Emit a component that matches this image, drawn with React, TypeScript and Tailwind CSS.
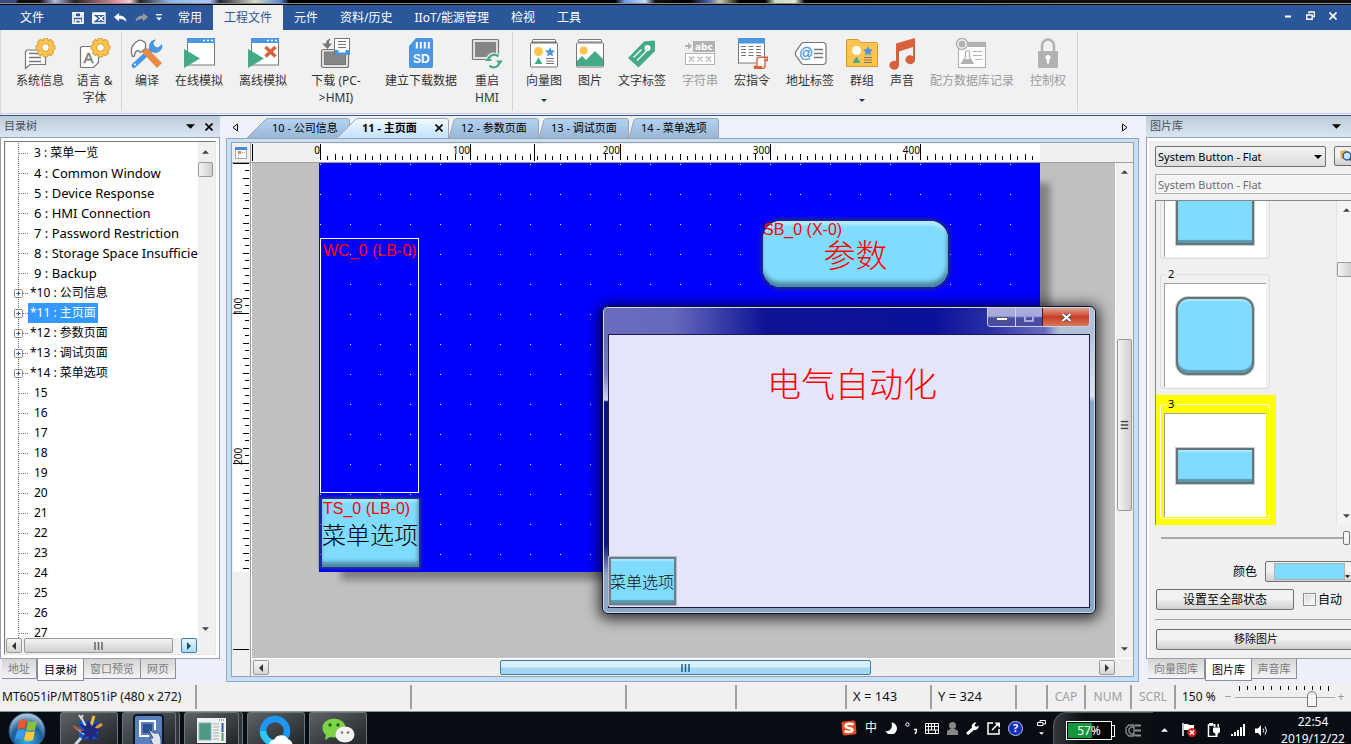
import { useState, type ReactNode } from "react";
import clsx from "clsx";

const FONT = "font-['Noto_Sans','Noto_Sans_CJK_SC',sans-serif]";
const SONG = "font-['Noto_Sans_CJK_SC',sans-serif] font-light";

const BLUE = "#4a96e0";
const GREEN = "#45aa86";
const RED = "#d9603f";
const GRAY = "#767676";
const PALE = "#b2b2b2";
const GOLD = "#fdc44f";

/* ---------- ribbon icons, drawn in a 36x32 box ---------- */

function Gear({ x, y }: { x: number; y: number }) {
  return (
    <g transform={`translate(${x} ${y})`}>
      {[0, 45, 90, 135].map((a) => (
        <rect key={a} x="-2.5" y="-9.5" width="5" height="19" rx="1.5" fill={GOLD} stroke="#d99a2b" transform={`rotate(${a})`} />
      ))}
      <circle r="7" fill={GOLD} />
      <circle r="3.8" fill="#fff" stroke="#d99a2b" />
    </g>
  );
}

function AppWindow() {
  return (
    <>
      <rect x="6.500" y="1" width="27" height="26" fill="#fff" stroke={GRAY} />
      <rect x="6" y="0" width="28" height="5" fill={BLUE} />
      <path d="M22 2.500h2M26 2.500h2M30 2.500h2" stroke="#fff" strokeWidth="1.500" />
      <path d="M3 11v19l16-9.500z" fill={GREEN} />
    </>
  );
}

function Star({ x, y }: { x: number; y: number }) {
  return <path transform={`translate(${x} ${y})`} d="M0-5l1.400 3.200 3.600.400-2.700 2.400.800 3.500L0 2.700-3.100 4.500l.800-3.500L-5-1.400l3.600-.400z" fill={BLUE} />;
}

const ICONS: Record<string, ReactNode> = {
  info: (
    <>
      <path d="M5 12h18.500v14.500H8l-4.500 4v-17z" fill="#fff" stroke={GRAY} strokeWidth="1.200" />
      <path d="M7 15.500h10M7 19.500h12M7 23.500h12" stroke={GRAY} strokeWidth="1.300" />
      <Gear x={23.5} y={9.5} />
    </>
  ),
  language: (
    <>
      <path d="M5 8.500h16.500v16l-5 5h-12a1 1 0 0 1-1-1V9.500z" fill="#fff" stroke={GRAY} strokeWidth="1.200" />
      <text x="6.500" y="25" fontSize="15" fill={GRAY} stroke={GRAY} strokeWidth=".4" fontFamily="Liberation Sans">A</text>
      <Gear x={23.5} y={9.5} />
    </>
  ),
  compile: (
    <>
      <path d="M5 27.500L24 10" stroke={BLUE} strokeWidth="5" strokeLinecap="round" />
      <path d="M27 1.500a7 7 0 0 0-6.500 9.500l3.500 3.500a7 7 0 0 0 9-8.500l-4 3.500-3.500-1-1-3.500z" fill={BLUE} />
      <path d="M13 14l5-4 15 15-5 5z" fill="#e98a43" />
      <path d="M3.500 18.500C1 12 3 6 9.500 2.500c2-.800 3.500-.500 5 1l2 1.500v5.500l-5 4-2.500-2C6 13 5.500 15.500 5.500 18z" fill="#fff" stroke={GRAY} strokeWidth="1.300" />
      <circle cx="6" cy="26.500" r="1" fill="#fff" />
    </>
  ),
  online: <AppWindow />,
  offline: (
    <>
      <AppWindow />
      <path d="M20.500 9l10 9.500M30.500 9l-10 9.500" stroke={RED} strokeWidth="3.500" />
    </>
  ),
  download: (
    <>
      <rect x="3.500" y="11.500" width="27" height="18" rx="2" fill="#e3e3e3" stroke={GRAY} strokeWidth="1.200" />
      <rect x="6.500" y="14" width="21" height="12.500" fill="#858585" stroke={GRAY} />
      <rect x="16.500" y=".5" width="15" height="16" fill="#fff" stroke={GRAY} />
      <path d="M20 3.500h8M20 6.500h8M20 9.500h8" stroke={GRAY} strokeWidth="1.200" />
      <path d="M17 12h3.500v2.500h7V12H32v5H17z" fill={BLUE} />
      <path d="M13 .5C9.500 1 8 3 8 5.500H4L9.500 11 14 5.500h-3c0-2 .500-3.500 2-5z" fill={GRAY} />
    </>
  ),
  sd: (
    <>
      <path d="M13 0h15a2 2 0 0 1 2 2v26a2 2 0 0 1-2 2H8a2 2 0 0 1-2-2V8z" fill={BLUE} />
      <path d="M13.800 4v6.500M17.800 4v6.500M21.800 4v6.500M25.800 4v6.500" stroke="#fff" strokeWidth="2" />
      <text x="10" y="24.500" fontSize="12" fontWeight="700" fill="#fff" fontFamily="Liberation Sans">SD</text>
    </>
  ),
  restart: (
    <>
      <rect x="3.500" y="1.500" width="26" height="20" rx="1" fill="#e3e3e3" stroke={GRAY} strokeWidth="1.200" />
      <rect x="6" y="4" width="21" height="15" fill="#858585" />
      <circle cx="25" cy="23" r="8.500" fill="#f1f1f1" />
      <path d="M19.500 22a5.800 5.800 0 0 1 10-3.500M30.500 24a5.800 5.800 0 0 1-10 3.500" fill="none" stroke={GREEN} strokeWidth="2.200" />
      <path d="M16 23h7l-3.500-4.500zM27 22.500h7l-3.500 4.500z" fill={GREEN} />
    </>
  ),
  vector: (
    <>
      <path d="M7 1.500h22l1 2.500H6z" fill="#fff" stroke={GRAY} />
      <rect x="4.500" y="5" width="27" height="24" rx="1" fill="#fff" stroke={GRAY} />
      <path d="M5 4.500h26" stroke={GRAY} />
      <circle cx="12.500" cy="13.500" r="4.500" fill={GOLD} />
      <Star x={24} y={14} />
      <path d="M8.500 26l4-6.500 4 6.500z" fill={GREEN} />
      <path d="M20 20.500h8M20 23h8M20 25.500h8" stroke={GRAY} />
    </>
  ),
  picture: (
    <>
      <path d="M7 1.500h22l1 2.500H6z" fill="#fff" stroke={GRAY} />
      <rect x="4.500" y="5" width="27" height="24" rx="1" fill="#fff" stroke={GRAY} />
      <circle cx="11.500" cy="12.500" r="4" fill={GOLD} />
      <path d="M5 23l5-5 4 4 9-9 8 8v7H5z" fill={GREEN} />
    </>
  ),
  tag: (
    <>
      <path d="M20 3.500L30 2.500a1.500 1.500 0 0 1 1 1V13L14.500 29.500 4 20z" fill={GREEN} />
      <path d="M9.500 19.500l8-8M13 22.500l11-11" stroke="#f1f1f1" strokeWidth="1.500" />
      <circle cx="23.500" cy="10" r="3" fill="#fff" />
    </>
  ),
  string: (
    <>
      <rect x="11" y="3" width="22" height="11" fill={PALE} />
      <text x="13" y="12" fontSize="9" fontWeight="700" fill="#fff" fontFamily="DejaVu Sans">abc</text>
      <path d="M3 8h5" stroke={PALE} strokeWidth="2" />
      <path d="M6 4.500l4 3.500-4 3.500z" fill={PALE} />
      <rect x="3.500" y="15.500" width="29" height="11" fill="#fff" stroke={PALE} />
      <path d="M7 18.500l5 5m0-5l-5 5M15.500 18.500l5 5m0-5l-5 5M24 18.500l5 5m0-5l-5 5" stroke={PALE} strokeWidth="1.200" />
    </>
  ),
  macro: (
    <>
      <rect x="4.500" y="1" width="26" height="24" fill="#fff" stroke={GRAY} />
      <rect x="4" y="0" width="27" height="5.500" fill={BLUE} />
      <path d="M7 8.500h21M7 11.500h21M7 14.500h21M7 17.500h21" stroke={GRAY} strokeDasharray="5 2.500" />
      <path d="M22 19h12v3.500h-2.500V28a2.500 2.500 0 0 1-2.500 2.500h-8.500V28H22z" fill="#fff" />
      <path d="M31 19.200v9a2 2 0 0 1-2 2h-8.500v-2H23V21a2 2 0 0 1 2-1.800h8.300v3.300H31" fill="none" stroke={RED} strokeWidth="1.400" />
      <path d="M20 28h8v2.500h-8z" fill={RED} />
    </>
  ),
  address: (
    <>
      <path d="M12 4.500h19a3 3 0 0 1 3 3v16a3 3 0 0 1-3 3H12a3 3 0 0 1-2.500-1.200L3.500 17v-3L9.500 5.700A3 3 0 0 1 12 4.500z" fill="#fff" stroke={GRAY} strokeWidth="1.200" />
      <text x="7" y="20" fontSize="14" fill={BLUE} stroke={BLUE} strokeWidth=".3" fontFamily="Liberation Sans">@</text>
      <path d="M22 11.500h9M22 15.500h9M22 19.500h9" stroke={GRAY} strokeWidth="1.500" />
    </>
  ),
  group: (
    <>
      <path d="M2.500 2.500a1 1 0 0 1 1-1H14l3 3h15.500a1 1 0 0 1 1 1v23h-31z" fill={GOLD} stroke="#d99a2b" />
      <circle cx="12.500" cy="12.500" r="4.500" fill="#fff" />
      <Star x={24} y={13} />
      <path d="M8.500 25l4-6.500 4 6.500z" fill={GREEN} />
      <path d="M20 19.500h8M20 22h8M20 24.500h8" stroke={GRAY} />
    </>
  ),
  sound: (
    <path d="M12 5.500L31 0v22a4.800 4.500 0 1 1-2-4V9l-14 4.500V27a4.800 4.500 0 1 1-3-4z" fill={RED} />
  ),
  recipe: (
    <>
      <rect x="4.500" y="4.500" width="27" height="25" fill="#fff" stroke={PALE} strokeWidth="1.200" />
      <rect x="14" y="4" width="18" height="5" fill={PALE} />
      <circle cx="8" cy="6" r="5.500" fill="#fff" stroke={PALE} strokeWidth="1.500" />
      <circle cx="8" cy="6" r="3.500" fill={PALE} />
      <path d="M19 13.500h9M19 17.500h9M21 21.500h7" stroke={PALE} strokeWidth="1.200" />
      <path d="M11.500 13h4v6l3.500 6.500H7.500l4-6.500z" fill="#fff" stroke={PALE} strokeWidth="1.200" />
      <path d="M10 21h7l2 4.500H8z" fill={PALE} />
    </>
  ),
  lock: (
    <>
      <path d="M12 14V8a6 6.500 0 0 1 12 0v6" fill="none" stroke={PALE} strokeWidth="2.500" />
      <rect x="8" y="13" width="20" height="17" rx="1" fill={PALE} />
      <circle cx="18" cy="19.500" r="2.500" fill="#fff" />
      <path d="M17 20h2v5.500h-2z" fill="#fff" />
    </>
  ),
};

type RibbonItem = { icon: string; lines: string[]; width: string; disabled?: boolean; menu?: boolean };

const RIBBON: RibbonItem[][] = [
  [
    { icon: "info", lines: ["系统信息"], width: "w-14" },
    { icon: "language", lines: ["语言 &", "字体"], width: "w-[53px]" },
  ],
  [
    { icon: "compile", lines: ["编译"], width: "w-[50px]" },
    { icon: "online", lines: ["在线模拟"], width: "w-[54px]" },
    { icon: "offline", lines: ["离线模拟"], width: "w-[74px]" },
    { icon: "download", lines: ["下载 (PC-", ">HMI)"], width: "w-[72px]" },
    { icon: "sd", lines: ["建立下载数据"], width: "w-[98px]" },
    { icon: "restart", lines: ["重启", "HMI"], width: "w-[34px]" },
  ],
  [
    { icon: "vector", lines: ["向量图"], width: "w-12", menu: true },
    { icon: "picture", lines: ["图片"], width: "w-11" },
    { icon: "tag", lines: ["文字标签"], width: "w-[60px]" },
    { icon: "string", lines: ["字符串"], width: "w-14", disabled: true },
    { icon: "macro", lines: ["宏指令"], width: "w-12" },
    { icon: "address", lines: ["地址标签"], width: "w-[68px]" },
    { icon: "group", lines: ["群组"], width: "w-9", menu: true },
    { icon: "sound", lines: ["声音"], width: "w-11" },
    { icon: "recipe", lines: ["配方数据库记录"], width: "w-24", disabled: true },
    { icon: "lock", lines: ["控制权"], width: "w-14", disabled: true },
  ],
];

const GROUP_PADDING = ["pl-3", "pr-2", "pl-[7px] pr-px"];

function Caret({ dir = "down", className }: { dir?: "down" | "up" | "left" | "right"; className?: string }) {
  const d = { down: "M0 0h8L4 4z", up: "M0 4h8L4 0z", left: "M4 0v8L0 4z", right: "M0 0v8l4-4z" }[dir];
  const flat = dir === "down" || dir === "up";
  return (
    <svg viewBox={flat ? "0 0 8 4" : "0 0 4 8"} className={clsx(flat ? "h-1 w-2" : "h-2 w-1", className)} aria-hidden="true">
      <path d={d} fill="currentColor" />
    </svg>
  );
}

function TitleStrip() {
  return (
    <div className="h-[5px] shrink-0 bg-black">
      <div className="h-[3px] bg-[linear-gradient(90deg,#3a4a80_0,#3a4a80_16px,#111_18px,#111_40px,#aebce8_55px,#222_75px,#e08a98_115px,#f4d0d8_130px,#222_140px,#8fb8f0_170px,#a8c8ff_210px,#223_220px,#d8dcc0_255px,#5c86d8_280px,#000_290px,#000_615px,#6a9cf0_625px,#c8dcff_645px,#111_655px,#000_690px,#5068b0_710px,#c8d0a8_720px,#000_740px,#000_765px,#c8dcc0_775px,#dce8d0_795px,#000_805px,#111_1100px)]" />
      <div className="h-px bg-[#8a8a8a]" />
    </div>
  );
}

function MenuBar() {
  const tabs = ["常用", "工程文件", "元件", "资料/历史", "IIoT/能源管理", "检视", "工具"];
  const [active, setActive] = useState("工程文件");
  return (
    <nav className="flex h-[25px] shrink-0 items-stretch bg-[#2b579a] text-xs text-white">
      <button className="w-16 text-center">文件</button>
      <div className="flex w-[103px] items-center gap-2 pl-2">
        <button aria-label="保存">
          <svg viewBox="0 0 12 12" className="size-3"><path d="M1 .7h10v10.600H1zM3 1v4h6V1M3.500 11V8h5v3" fill="none" stroke="#fff" strokeWidth="1.700" /></svg>
        </button>
        <button aria-label="关闭工程">
          <svg viewBox="0 0 14 12" className="h-3 w-3.5"><path d="M1 4V1h12v10H1V9" fill="none" stroke="#fff" strokeWidth="1.400" /><path d="M0 3v7l5-3.500zM6.500 4l5 5m0-5l-5 5" fill="#fff" stroke="#fff" strokeWidth="1.500" /><path d="M1 2h12" stroke="#fff" strokeWidth="2" /></svg>
        </button>
        <button aria-label="撤销">
          <svg viewBox="0 0 13 10" className="h-2.5 w-[13px]"><path d="M0 4l5-4v2.500c4 0 7 2 7.500 6.500C10.500 6.500 8 6 5 6v2.500z" fill="#fff" /></svg>
        </button>
        <button aria-label="重做">
          <svg viewBox="0 0 13 10" className="h-2.5 w-[13px]"><path d="M13 4L8 0v2.500C4 2.500 1 4.500.500 9 2.500 6.500 5 6 8 6v2.500z" fill="#9a9a9a" /></svg>
        </button>
        <button aria-label="更多">
          <svg viewBox="0 0 6 7" className="h-[7px] w-1.5"><path d="M0 .7h6" stroke="#fff" strokeWidth="1.300" /><path d="M0 3.500h6l-3 3z" fill="#fff" /></svg>
        </button>
      </div>
      {tabs.map((t) => (
        <button
          key={t}
          onClick={() => setActive(t)}
          className={clsx("px-[11px] whitespace-nowrap", t === active && "bg-[#f1f1f1] text-[#2b579a]")}
        >
          {t}
        </button>
      ))}
      <div className="ml-auto flex items-center gap-3.5 pr-3.5 pb-1">
        <button aria-label="最小化"><svg viewBox="0 0 8 8" className="size-2"><path d="M1 4.500h6" stroke="#fff" strokeWidth="2" /></svg></button>
        <button aria-label="还原"><svg viewBox="0 0 9 9" className="size-[9px]"><path d="M3 2.500V1h5.500v4.500H6.500M.7 4h5.500v4.300H.7z" fill="none" stroke="#fff" strokeWidth="1.400" /></svg></button>
        <button aria-label="关闭"><svg viewBox="0 0 8 8" className="size-2"><path d="M.5.5l7 7m0-7l-7 7" stroke="#fff" strokeWidth="1.700" /></svg></button>
      </div>
    </nav>
  );
}

function Ribbon() {
  return (
    <div className="flex h-[86px] shrink-0 items-start border-b border-[#2b579a] bg-[#f1f1f1] pt-0.5 shadow-[inset_1px_0_0_#d8d8d8,inset_0_-1px_0_#f1f1f1,inset_0_-2px_0_#d0d0d0]">
      {RIBBON.map((group, i) => (
        <div key={i} className={clsx("flex h-[79px] border-r border-[#d2d2d2]", GROUP_PADDING[i])}>
          {group.map((item) => (
            <button
              key={item.icon}
              disabled={item.disabled}
              className={clsx("flex flex-col items-center pt-1.5 text-xs leading-[17px]", item.width, item.disabled ? "text-[#9b9b9b]" : "text-[#333]")}
            >
              <svg viewBox="0 0 36 32" className="mb-0.5 h-8 w-9 shrink-0" aria-hidden="true">{ICONS[item.icon]}</svg>
              {item.lines.map((l) => (
                <span key={l} className="whitespace-nowrap">{l}</span>
              ))}
              {item.menu && <Caret className="mt-2.5 h-[3px] w-[6px] text-[#1f3864]" />}
            </button>
          ))}
        </div>
      ))}
    </div>
  );
}

/* ---------- shared panel pieces ---------- */

function PanelHeader({ title, closable }: { title: string; closable?: boolean }) {
  return (
    <div className="flex h-[22px] shrink-0 items-center border-b border-[#9aa0ae] bg-linear-to-b from-[#bfccda] to-[#d8e6f2] pl-1 text-[11px] text-[#4a4f58]">
      <h2 className="flex-1">{title}</h2>
      <button aria-label="菜单" className="mr-2.5 text-black"><Caret className="h-[5px] w-[9px]" /></button>
      {closable && (
        <button aria-label="关闭" className="mr-[7px]">
          <svg viewBox="0 0 8 8" className="size-2"><path d="M.5.5l7 7m0-7l-7 7" stroke="#000" strokeWidth="1.600" /></svg>
        </button>
      )}
    </div>
  );
}

function BottomTabs({ tabs, active }: { tabs: { label: string; width: string }[]; active: string }) {
  return (
    <div className="flex h-[23px] shrink-0 items-start bg-[#edeffb] pl-0.5 text-[11px]" role="tablist">
      {tabs.map((t) => (
        <button
          key={t.label}
          role="tab"
          aria-selected={t.label === active}
          className={clsx(
            "shrink-0 border border-t-0 border-[#8d8d99] text-center leading-[19px]",
            t.width,
            t.label === active ? "h-[22px] bg-white text-black" : "h-5 border-l-0 bg-linear-to-b from-[#d4d4d4] to-[#f4f4f4] text-[#7b7b7b]",
          )}
        >
          {t.label}
        </button>
      ))}
    </div>
  );
}

function Grip({ vertical, className }: { vertical?: boolean; className?: string }) {
  return (
    <svg viewBox="0 0 9 8" className={clsx("h-2 w-[9px]", vertical && "rotate-90", className)} aria-hidden="true">
      <path d="M1 0v8M4.500 0v8M8 0v8" stroke="currentColor" strokeWidth="1.500" />
    </svg>
  );
}

const SCROLL_BTN = "flex items-center justify-center rounded-[2px] border border-[#9a9a9a] bg-linear-to-b from-[#f6f6f6] to-[#d4d4d4] text-[#333]";

/* ---------- left panel ---------- */

const TREE = [
  "3 : 菜单一览", "4 : Common Window", "5 : Device Response", "6 : HMI Connection", "7 : Password Restriction",
  "8 : Storage Space Insufficient", "9 : Backup", "*10 : 公司信息", "*11 : 主页面", "*12 : 参数页面", "*13 : 调试页面",
  "*14 : 菜单选项", "15", "16", "17", "18", "19", "20", "21", "22", "23", "24", "25", "26", "27",
];

function TreeRow({ label, selected, onSelect }: { label: string; selected: boolean; onSelect: () => void }) {
  const used = label.startsWith("*");
  const latin = /[a-z]/i.test(label);
  return (
    <li className="flex h-5 items-center">
      <svg viewBox="0 0 28 20" className="h-5 w-[22px] shrink-0" preserveAspectRatio="xMinYMid slice" aria-hidden="true">
        <path d="M12.500 0v20M13 10.500h9" stroke="#777" strokeDasharray="1 1" />
        {used && (
          <>
            <rect x="8.500" y="6.500" width="8" height="8" rx="1" fill="#fff" stroke="#8a8a8a" />
            <path d="M10.500 10.500h4M12.500 8.500v4" stroke="#2a4a9a" />
          </>
        )}
      </svg>
      <button
        onClick={onSelect}
        className={clsx(
          "h-5 pr-0.5 leading-none whitespace-nowrap",
          latin ? "text-[13px]" : "text-xs",
          used ? "pl-0.5" : "pl-1.5",
          selected && "bg-[#3399ff] text-white",
        )}
      >
        {label}
      </button>
    </li>
  );
}

function TreePanel() {
  const [selected, setSelected] = useState("*11 : 主页面");
  return (
    <aside className="flex w-[220px] shrink-0 flex-col">
      <PanelHeader title="目录树" closable />
      <div className="min-h-0 flex-1 border border-t-0 border-[#9aa0ae] bg-white p-[3px]">
        <div className="flex h-full flex-col border border-[#777] border-r-[#e8e8e8] border-b-[#e8e8e8] bg-[#f0f0f0] pl-px">
          <div className="flex min-h-0 flex-1">
            <ul className="min-w-0 flex-1 overflow-hidden bg-white pt-px">
              {TREE.map((t) => (
                <TreeRow key={t} label={t} selected={t === selected} onSelect={() => setSelected(t)} />
              ))}
            </ul>
            <div className="flex w-[17px] flex-col items-center bg-[#f0f0f0] pr-0.5">
              <button aria-label="上" className="flex h-5 items-center text-[#444]"><Caret dir="up" className="w-[7px]" /></button>
              <div className="h-[15px] w-[15px] rounded-[2px] border border-[#999] bg-linear-to-r from-[#f4f4f4] to-[#cfcfcf]" />
              <button aria-label="下" className="mt-auto flex h-[18px] items-center text-[#444]"><Caret className="w-[7px]" /></button>
            </div>
          </div>
          <div className="flex h-4 shrink-0 items-center pb-px">
            <button aria-label="左" className={clsx(SCROLL_BTN, "h-[15px] w-4")}><Caret dir="left" /></button>
            <div className="ml-0.5 flex h-[15px] w-[149px] items-center justify-center rounded-[2px] border border-[#999] bg-linear-to-b from-[#f4f4f4] to-[#cfcfcf] text-[#666]"><Grip /></div>
            <button aria-label="右" className="mr-[18px] ml-auto flex h-[15px] w-4 items-center justify-center rounded-[2px] border border-[#3c7fb1] bg-linear-to-b from-[#e6f6fd] to-[#a7d9f5] text-[#1f4d70]"><Caret dir="right" /></button>
          </div>
        </div>
      </div>
      <BottomTabs
        active="目录树"
        tabs={[
          { label: "地址", width: "w-[35px] border-l" },
          { label: "目录树", width: "w-[47px]" },
          { label: "窗口预览", width: "w-[57px]" },
          { label: "网页", width: "w-[35px]" },
        ]}
      />
    </aside>
  );
}

/* ---------- editor ---------- */

function EditorTabs() {
  const tabs = [
    { label: "10 - 公司信息", width: 103, slant: 18, active: false },
    { label: "11 - 主页面", width: 112, slant: 18, active: true },
    { label: "12 - 参数页面", width: 90, slant: 5, active: false },
    { label: "13 - 调试页面", width: 90, slant: 5, active: false },
    { label: "14 - 菜单选项", width: 90, slant: 5, active: false },
  ];
  return (
    <div className="flex h-[22px] items-end bg-[#eef1fc]">
      <button aria-label="向左" className="mr-[9px] ml-3 self-center">
        <svg viewBox="0 0 6 9" className="h-[9px] w-[6px]"><path d="M5.500 1v7L1 4.500z" fill="none" stroke="#000" /></svg>
      </button>
      {tabs.map((t, i) => (
        <button
          key={t.label}
          className={clsx("relative flex h-5 items-center text-[11px] whitespace-nowrap", t.active && "z-10 -ml-[13px] font-bold", t.slant > 5 ? "pl-[25px]" : "pl-3")}
          style={{ width: t.width }}
        >
          <svg width={t.width} height="20" className="absolute inset-0" aria-hidden="true">
            <defs>
              <linearGradient id={`tab${i}`} x1="0" y1="0" x2="0" y2="1">
                <stop offset="0" stopColor={t.active ? "#f2fcff" : "#b4d4f4"} />
                <stop offset="1" stopColor={t.active ? "#c2e0ff" : "#9ab6d4"} />
              </linearGradient>
            </defs>
            <path
              d={`M0 20L${t.slant} 2Q${t.slant + 1} .5 ${t.slant + 4} .5H${t.width - 3}Q${t.width - 0.5} .5 ${t.width - 0.5} 3V20`}
              fill={`url(#tab${i})`}
              stroke="#a0a4b0"
            />
          </svg>
          <span className="relative">{t.label}</span>
          {t.active && <svg viewBox="0 0 8 8" className="relative ml-auto mr-1.5 size-2" aria-label="关闭"><path d="M.5.5l7 7m0-7l-7 7" stroke="#000" strokeWidth="1.600" /></svg>}
        </button>
      ))}
      <button aria-label="向右" className="mr-[18px] ml-auto self-center">
        <svg viewBox="0 0 6 9" className="h-[9px] w-[6px]"><path d="M.5 1v7L5 4.500z" fill="none" stroke="#000" /></svg>
      </button>
    </div>
  );
}

function HorizontalRuler() {
  const ticks = Array.from({ length: 96 }, (_, i) => i);
  return (
    <svg className="h-[19px] w-full" shapeRendering="crispEdges" aria-hidden="true">
      <rect width="100%" height="19" fill="#f0f0f0" />
      <rect x="69" y="1" width="720" height="17" fill="#fff" />
      <path d="M1.500 1v17M283.500 1v17" stroke="#000" />
      {ticks.map((i) => {
        const x = Math.floor(69 + i * 7.5) + 0.5;
        const top = i % 20 === 0 ? 1 : i % 2 === 0 ? 11 : 13;
        return <path key={i} d={`M${x} ${top}V17`} stroke="#000" />;
      })}
      {[0, 100, 200, 300, 400].map((n) => (
        <text key={n} x={69 + n * 1.5} y="11" fontSize="10" textAnchor="end" fontFamily="Noto Sans">{n}</text>
      ))}
    </svg>
  );
}

function VerticalRuler() {
  const ticks = Array.from({ length: 55 }, (_, i) => i);
  return (
    <svg className="h-full w-[19px] shrink-0 border-r border-[#a0a0a0]" shapeRendering="crispEdges" aria-hidden="true">
      <rect width="19" height="100%" fill="#f0f0f0" />
      <rect x="1" width="17" height="409" fill="#fff" />
      <path d="M1 486.500h16M1 0h16" stroke="#000" />
      {ticks.map((i) => {
        const y = Math.floor(i * 7.5) + 0.5;
        const left = i % 20 === 0 ? 1 : i % 2 === 0 ? 11 : 13;
        return <path key={i} d={`M${left} ${y}H17`} stroke="#000" />;
      })}
      {[100, 200].map((n) => (
        <text key={n} transform={`translate(10 ${n * 1.5 + 2}) rotate(-90)`} fontSize="10" fontFamily="Noto Sans">{n}</text>
      ))}
    </svg>
  );
}

function PreviewDialog() {
  return (
    <section className="absolute top-[143px] left-[350px] flex h-[308px] w-[494px] flex-col overflow-visible rounded-[6px] border border-[#12142c] bg-[#8ca6c6] shadow-[0_2px_14px_3px_rgba(0,0,0,0.75)]">
      <div className="flex min-h-0 flex-1 flex-col overflow-hidden rounded-[5px] border border-[#d8e2f4]/80">
        <header className="flex h-[26px] shrink-0 items-start justify-end bg-[linear-gradient(90deg,#6a6cc0_0,#6668bd_70px,#0f1496_160px,#0b109a_330px,#2a2ea4_385px,#6466be_435px,#6466be_440px,#b2c2d6_455px)] pr-1">
          <div className="flex h-[19px] overflow-hidden rounded-b-[4px] border border-t-0 border-[#c8d0ec]">
            <button aria-label="最小化" className="flex w-7 items-center justify-center border-r border-[#c8d0ec] bg-linear-to-b from-[#a8aadc] from-45% to-[#4a4ca4] to-55%">
              <span className="mt-1 h-1 w-3 border border-[#555] bg-white" />
            </button>
            <button aria-label="最大化" className="flex w-[26px] items-center justify-center bg-linear-to-b from-[#a8aadc] from-45% to-[#4a4ca4] to-55%">
              <span className="h-[9px] w-2.5 border-2 border-[#a4a8dc]" />
            </button>
            <button aria-label="关闭" className="flex w-[47px] items-center justify-center border-l border-[#4a1818] bg-linear-to-b from-[#e0a090] from-0% via-[#c83c24] via-50% to-[#d87858]">
              <svg viewBox="0 0 11 9" className="h-[9px] w-[11px]"><path d="M1.500 1l8 7m0-7l-8 7" stroke="#444" strokeWidth="3.500" /><path d="M1.500 1l8 7m0-7l-8 7" stroke="#fff" strokeWidth="2.200" /></svg>
            </button>
          </div>
        </header>
        <div className="flex min-h-0 flex-1">
          <div className="w-1 bg-[linear-gradient(180deg,#6668c0_0,#7a7cc8_40px,#d4d4f0_66px,#0b0f8c_68px,#0b0f8c_210px,#8ca6c6_240px)]" />
          <div className="relative flex flex-1 flex-col items-start justify-between border border-[#1a1c50] bg-[#e4e4fa]">
            <h1 className={clsx(SONG, "mt-[23px] self-center text-[34px] leading-[50px] text-[#ff0000]")}>
              <span className="pl-1.5">电气自动化</span>
            </h1>
            <button className={clsx(SONG, "mb-0.5 h-[48px] w-[67px] border-2 border-[#6d7f88] bg-[#80dcff] text-base whitespace-nowrap text-[#111] shadow-[0_0_0_1px_#b8b8cc,inset_0_-3px_1px_#5a98b0,inset_0_2px_1px_#a8e8ff]")}>
              <span className="-ml-px">菜单选项</span>
            </button>
          </div>
          <div className="w-1 bg-[linear-gradient(180deg,#b4c4d8_0,#dce6ee_62px,#8ca6c6_68px)]" />
        </div>
        <div className="h-1 shrink-0" />
      </div>
    </section>
  );
}

function Canvas() {
  return (
    <div className="relative min-w-0 flex-1 overflow-hidden border-l border-white bg-[#c0c0c0]">
      {/* HMI page, 480 x 272 at 150 % */}
      <div className="absolute top-0 left-[67px] h-[409px] w-[721px] bg-[#0000ff] shadow-[16px_14px_7px_-6px_#808080]">
        <svg className="absolute size-full" shapeRendering="crispEdges" aria-hidden="true">
          <defs>
            <pattern id="grid" width="30" height="30" patternUnits="userSpaceOnUse">
              <rect x="1" y="1" width="1" height="1" fill="#fff" />
            </pattern>
          </defs>
          <rect width="100%" height="100%" fill="url(#grid)" />
        </svg>
        <div className="absolute top-[75px] left-px h-[255px] w-[99px] border border-white pl-0.5 font-['Liberation_Sans'] text-base leading-6 whitespace-nowrap text-[#ff0000]">
          WC_0 (LB-0)
        </div>
        <div className="absolute top-[336px] left-[3px] h-[68px] w-[97px] bg-[#80dcff] whitespace-nowrap shadow-[0_0_3px_2px_#2c3c78,inset_-1px_-5px_4px_#4a86a0,inset_0_3px_3px_#a8e8ff]">
          <div className="pl-px font-['Liberation_Sans'] text-base leading-5 text-[#ff0000]">TS_0 (LB-0)</div>
          <div className={clsx(SONG, "text-2xl leading-[30px] text-black")}>菜单选项</div>
        </div>
        <div className="absolute top-[58px] left-[444px] h-[66px] w-[185px] rounded-[18px] bg-[#80dcff] whitespace-nowrap shadow-[0_0_4px_2px_#26306a,inset_-1px_-5px_4px_#4a86a0,inset_0_4px_3px_#b4ecff]">
          <div className="font-['Liberation_Sans'] text-base leading-[18px] text-[#ff0000]">SB_0 (X-0)</div>
          <div className={clsx(SONG, "text-center text-[32px] leading-7 text-[#ff0000]")}>参数</div>
        </div>
      </div>
      <PreviewDialog />
    </div>
  );
}

function Editor() {
  return (
    <main className="flex min-w-0 flex-1 flex-col bg-[#eef0fc]">
      <EditorTabs />
      <div className="mr-[7px] ml-1.5 flex min-h-0 flex-1 flex-col border border-[#a0a4ac] bg-[#c2e0ff] p-1 pt-[3px]">
        <div className="flex min-h-0 flex-1 flex-col border border-[#a0a0a0] bg-[#f0f0f0]">
          <div className="flex h-5 shrink-0 border-b border-[#a0a0a0]">
            <div className="flex w-[19px] shrink-0 items-center justify-center border-r border-[#a0a0a0]">
              <svg viewBox="0 0 12 12" className="size-3"><rect x=".5" y=".5" width="11" height="11" fill="#fff" stroke="#a8a8b0" /><path d="M0 0h12v3H0z" fill="#4a8ad8" /><path d="M3 4h3v3H3z" fill="#e88a4a" /><path d="M7 5.500h4M3.500 8v3" stroke="#999" strokeDasharray="1 1" /></svg>
            </div>
            <div className="min-w-0 flex-1"><HorizontalRuler /></div>
          </div>
          <div className="flex min-h-0 flex-1">
            <div className="w-[19px] shrink-0 overflow-hidden"><VerticalRuler /></div>
            <div className="flex min-w-0 flex-1 flex-col">
              <div className="flex min-h-0 flex-1">
                <Canvas />
                <div className="flex w-[18px] shrink-0 flex-col items-center border-l border-white bg-[#f0f0f0] text-[#444]">
                  <button aria-label="上" className="flex h-[18px] items-center"><Caret dir="up" className="w-[7px]" /></button>
                  <div className="mt-[158px] flex h-[172px] w-[15px] items-center justify-center rounded-[2px] border border-[#999] bg-linear-to-r from-[#f4f4f4] to-[#cfcfcf]"><Grip vertical /></div>
                  <button aria-label="下" className="mt-auto flex h-[18px] items-center"><Caret className="w-[7px]" /></button>
                </div>
              </div>
              <div className="flex h-[18px] shrink-0 items-start border-t border-white bg-[#eee] pt-px">
                <button aria-label="左" className={clsx(SCROLL_BTN, "ml-0.5 h-[15px] w-4")}><Caret dir="left" /></button>
                <div className="ml-[231px] flex h-[15px] w-[371px] items-center justify-center rounded-[2px] border border-[#3c7fb1] bg-linear-to-b from-[#d9f0fc] from-45% to-[#a4d8f2] to-55% text-[#1f5f8a]"><Grip /></div>
                <button aria-label="右" className={clsx(SCROLL_BTN, "mr-[18px] ml-auto h-[15px] w-4")}><Caret dir="right" /></button>
              </div>
            </div>
          </div>
        </div>
      </div>
    </main>
  );
}

/* ---------- right panel ---------- */

function PictureCard({ title, shape, selected }: { title?: string; shape: string; selected?: boolean }) {
  return (
    <div className={clsx("h-[130px] w-[120px] shrink-0 pt-0.5 pr-1.5 pb-1.5 pl-1", selected && "bg-[#ffff00]")}>
      <fieldset className={clsx("h-[122px] rounded-[3px] border px-[3px]", selected ? "border-white" : "border-[#d5dfe5]")}>
        <legend className="ml-0.5 h-[14px] px-0.5 text-[11px] leading-[14px]">{title}</legend>
        <div className="mt-0.5 flex h-[104px] items-center justify-center border-t border-l border-[#a0a0a0] bg-white pr-0.5">
          <div className={clsx("w-[78px] border-2 border-[#667478] bg-[#80dcff] shadow-[0_0_0_1px_#ccc,inset_0_-3px_1px_#5a98b0,inset_0_2px_1px_#a8e8ff]", shape)} />
        </div>
      </fieldset>
    </div>
  );
}

const WIN_BTN = "rounded-[2px] border border-[#707070] bg-linear-to-b from-[#f2f2f2] from-45% to-[#cfcfcf] text-xs";

function PicturePanel() {
  return (
    <aside className="flex w-[205px] shrink-0 flex-col overflow-hidden">
      <PanelHeader title="图片库" />
      <div className="flex min-h-0 flex-1 flex-col border-b border-l border-[#9aa0ae] bg-[#f0f0f0] pt-2 pl-2 shadow-[inset_2px_3px_0_#fff]">
        <div className="flex h-[21px] shrink-0 gap-2">
          <div className="relative flex">
            <select aria-label="图片库" className="h-[21px] w-[171px] appearance-none rounded-[2px] border border-[#707070] bg-linear-to-b from-[#f2f2f2] to-[#dcdcdc] pl-0.5 text-[11px] leading-[19px]">
              <option>System Button - Flat</option>
            </select>
            <Caret className="pointer-events-none absolute top-[9px] right-1" />
          </div>
          <button aria-label="浏览" className={clsx(WIN_BTN, "flex h-5 w-7 items-center p-0.5")}>
            <svg viewBox="0 0 14 14" className="ml-0.5 size-3.5 shrink-0"><path d="M1 2l6-1 3 2v7H2z" fill="#f0b050" /><circle cx="8" cy="7" r="4" fill="#bfe4ff" stroke="#2a5a9a" strokeWidth="1.500" /><path d="M11 10l3 3" stroke="#333" strokeWidth="2" /></svg>
          </button>
        </div>
        <input aria-label="名称" disabled value="System Button - Flat" readOnly className="mt-[7px] h-5 w-[240px] shrink-0 border border-[#b4b4b4] bg-[#f4f4f4] pl-0.5 text-[11px] text-[#6d6d6d]" />
        <div className="mt-1.5 flex h-[325px] shrink-0 overflow-hidden border-t border-l border-[#828790]">
          <div className="flex-1">
            <div className="-mt-[66px]">
              <PictureCard shape="h-[78px]" />
              <PictureCard title="2" shape="h-[78px] rounded-[12px]" />
              <PictureCard title="3" shape="h-9" selected />
            </div>
          </div>
          <div className="flex w-[15px] flex-col items-end border-l border-[#e4e4e4] bg-[#f4f4f4] text-[#444]">
            <button aria-label="上" className="mr-px flex h-[18px] items-center"><Caret dir="up" className="w-[7px]" /></button>
            <div className="mt-[43px] h-[15px] w-[14px] rounded-l-[2px] border border-r-0 border-[#999] bg-linear-to-r from-[#f4f4f4] to-[#cfcfcf]" />
            <button aria-label="下" className="mt-auto mr-px flex h-[18px] items-center"><Caret className="w-[7px]" /></button>
          </div>
        </div>
        <input
          type="range"
          aria-label="缩放"
          defaultValue={100}
          className="mt-1.5 mr-px ml-1.5 h-[14px] w-[189px] shrink-0 appearance-none [background:linear-gradient(#a8a8a8,#a8a8a8)_no-repeat_0_6px/100%_2px] [&::-webkit-slider-thumb]:h-[14px] [&::-webkit-slider-thumb]:w-[7px] [&::-webkit-slider-thumb]:appearance-none [&::-webkit-slider-thumb]:rounded-[2px] [&::-webkit-slider-thumb]:border [&::-webkit-slider-thumb]:border-[#777] [&::-webkit-slider-thumb]:bg-[#f4f4f4]"
        />
        <div className="mt-4 flex h-[21px] shrink-0 items-center pl-[78px] text-xs">
          <span className="w-8 shrink-0 whitespace-nowrap">颜色</span>
          <button aria-label="颜色" className={clsx(WIN_BTN, "flex h-[21px] w-[110px] items-end pl-2")}>
            <span className="h-[17px] w-[71px] self-center border border-[#b0b0b0] bg-[#80dcff]" />
            <Caret className="mb-[3px] h-[3px] w-[5px]" />
          </button>
        </div>
        <div className="mt-[7px] flex h-[21px] shrink-0 items-center text-xs">
          <button className={clsx(WIN_BTN, "ml-px h-[21px] w-[138px]")}>设置至全部状态</button>
          <label className="ml-[9px] flex items-center gap-0.5 whitespace-nowrap">
            <input type="checkbox" className="size-[13px] appearance-none border border-[#8e8f8f] bg-linear-to-br from-[#d4d6d8] to-white shadow-[inset_0_0_0_1px_#f4f4f4]" />
            自动
          </label>
        </div>
        <hr className="mt-[9px] border-[#a0a0a0]" />
        <button className={clsx(WIN_BTN, "mt-[9px] ml-px h-[21px] w-[200px] text-[11px]")}>移除图片</button>
      </div>
      <BottomTabs
        active="图片库"
        tabs={[
          { label: "向量图库", width: "w-[57px] border-l" },
          { label: "图片库", width: "w-[47px]" },
          { label: "声音库", width: "w-[45px]" },
        ]}
      />
    </aside>
  );
}

/* ---------- status bar ---------- */

function StatusBar() {
  const cell = "h-6 shrink-0 flex items-center border-r-2 border-[#a0a0a0] whitespace-nowrap";
  return (
    <footer className="flex h-[29px] shrink-0 items-center bg-[#f0f0f0] text-xs text-[#111]">
      <span className={clsx(cell, "w-[197px] pl-0.5")}>MT6051iP/MT8051iP (480 x 272)</span>
      <span className={clsx(cell, "w-[215px]")} />
      <span className={clsx(cell, "w-[215px]")} />
      <span className={clsx(cell, "w-[110px]")} />
      <span className={clsx(cell, "w-[110px]")} />
      <span className={clsx(cell, "w-[85px] pl-1.5 text-[13px]")}>X = 143</span>
      <span className={clsx(cell, "w-[85px] pl-1.5 text-[13px]")}>Y = 324</span>
      <span className={clsx(cell, "w-[31px]")} />
      <span className={clsx(cell, "w-[38px] justify-center text-[#a0a0a0]")}>CAP</span>
      <span className={clsx(cell, "w-[46px] justify-center text-[#a0a0a0]")}>NUM</span>
      <span className={clsx(cell, "w-[44px] justify-center text-[#a0a0a0]")}>SCRL</span>
      <span className="w-[46px] pl-1.5 whitespace-nowrap">150 %</span>
      <button aria-label="缩小" className="w-3 text-[#999]">−</button>
      <div className="ml-px w-[100px]">
        <svg viewBox="0 0 100 5" className="h-[5px] w-[100px]" shapeRendering="crispEdges" aria-hidden="true">
          {Array.from({ length: 12 }, (_, i) => (
            <path key={i} d={`M${Math.round(4 + i * 8.1) + 0.5} 0v${i === 0 || i === 11 ? 5 : 4}`} stroke="#000" />
          ))}
        </svg>
        <input
          type="range"
          aria-label="缩放比例"
          defaultValue={80}
          className="block h-4 w-full appearance-none [background:linear-gradient(#a8a8a8,#a8a8a8)_no-repeat_0_6px/100%_1px] [&::-webkit-slider-thumb]:h-4 [&::-webkit-slider-thumb]:w-[10px] [&::-webkit-slider-thumb]:appearance-none [&::-webkit-slider-thumb]:rounded-t-full [&::-webkit-slider-thumb]:rounded-b-[2px] [&::-webkit-slider-thumb]:border [&::-webkit-slider-thumb]:border-[#777] [&::-webkit-slider-thumb]:bg-[#f4f4f4]"
        />
      </div>
      <button aria-label="放大" className="w-3 text-[#999]">+</button>
    </footer>
  );
}

/* ---------- taskbar ---------- */

const TASKS: { name: string; width: string; stacked?: boolean; icon: ReactNode }[] = [
  {
    name: "工具箱", width: "w-[58px]", icon: (
      <>
        <rect x="8" y="8" width="19" height="18" fill="#1550c8" />
        <path d="M4 14l9 7M10 4l6 12" stroke="#d8dce0" strokeWidth="2" />
        <path d="M8 2l2 3 2-3" fill="none" stroke="#d8dce0" strokeWidth="2" />
        <path d="M23 3l-5 16" stroke="#f0c030" strokeWidth="3" />
        <path d="M31 11l-13 9" stroke="#e09838" strokeWidth="3" />
        <path d="M2 13l11 6" stroke="#b0582c" strokeWidth="2" />
        <path d="M8 11l6 6-5 2 6 2-4 5 6-3 3 8 2-8 6 3-3-7 5-3-6-1 3-6-6 4-4-6-2 6z" fill="#20287c" />
        <path d="M4 32l6-7" stroke="#d0d4d8" strokeWidth="3" />
      </>
    ),
  },
  {
    name: "EasyBuilder", width: "w-[54px]", stacked: true, icon: (
      <>
        <rect x="3" y="2" width="29" height="32" rx="3" fill="#5a80bc" stroke="#101828" strokeWidth="2" />
        <path d="M24 17V8H9v15h9" fill="none" stroke="#fff" strokeWidth="2" />
        <rect x="12" y="11" width="9" height="9" fill="#2c508c" />
        <path d="M17 16l6 4h5l2 6v6h-8l-3-7h3z" fill="#dde4f0" stroke="#33507c" />
      </>
    ),
  },
  {
    name: "模拟器", width: "w-[55px]", stacked: true, icon: (
      <>
        <rect x="3" y="5" width="29" height="25" fill="#f0f2f2" />
        <path d="M25 7h6" stroke="#555" strokeDasharray="1 1" />
        <rect x="5" y="10" width="12" height="17" fill="#4c9a86" stroke="#8ab0b8" />
        <path d="M19 11h6M19 14h6M19 17h6M19 20h6M19 23h6M19 26h6" stroke="#a8a8a8" />
        <path d="M28.500 10v9" stroke="#2858a0" strokeWidth="2" />
        <path d="M28.500 20v8" stroke="#50a060" strokeWidth="2" />
      </>
    ),
  },
  {
    name: "浏览器", width: "w-[58px]", icon: (
      <>
        <circle cx="17" cy="18" r="12" fill="none" stroke="#1f96f0" strokeWidth="6.500" />
        <path d="M5 18a12 12 0 0 0 12 12" fill="none" stroke="#2bc8f8" strokeWidth="6.500" />
        <path d="M13 36a5 5 0 0 1 3-9 8 8 0 0 1 14-1 6 6 0 0 1 4 8z" fill="#fff" />
      </>
    ),
  },
  {
    name: "微信", width: "w-[58px]", icon: (
      <>
        <ellipse cx="14" cy="15" rx="11.500" ry="9.500" fill="#7bd444" />
        <path d="M6 21l-1 6 7-4z" fill="#7bd444" />
        <circle cx="10" cy="12" r="1.700" fill="#2c5a18" /><circle cx="18" cy="12" r="1.700" fill="#2c5a18" />
        <ellipse cx="25" cy="21.500" rx="9.500" ry="8" fill="#f2f2f2" />
        <circle cx="22" cy="19.500" r="1.300" fill="#777" /><circle cx="28" cy="19.500" r="1.300" fill="#777" />
      </>
    ),
  },
];

function TrayIcon({ box, className, label, children }: { box: string; className: string; label: string; children: ReactNode }) {
  return (
    <button aria-label={label}>
      <svg viewBox={box} className={className}>{children}</svg>
    </button>
  );
}

function Taskbar() {
  return (
    <div className="flex h-[33px] shrink-0 overflow-hidden border-t border-[#8c98a0] bg-[#080d14] text-white">
      <button aria-label="开始" className="w-[60px] pl-2">
        <svg viewBox="0 0 40 40" className="size-10">
          <defs>
            <radialGradient id="orb" cx=".5" cy=".75" r=".7">
              <stop offset="0" stopColor="#3cb4e8" />
              <stop offset=".6" stopColor="#1c5c98" />
              <stop offset="1" stopColor="#a8c4dc" />
            </radialGradient>
          </defs>
          <circle cx="19" cy="19" r="18" fill="url(#orb)" stroke="#24486c" />
          <path d="M11 9q4-3 8-1l-2 9q-4-2-8 1z" fill="#e8582c" />
          <path d="M20 9q4 2 9 0l-2 9q-4 2-9 0z" fill="#88c040" />
          <path d="M9 19q4-3 8-1l-2 9q-4-2-8 1z" fill="#3c9ce8" />
          <path d="M18 19q4 2 9 0l-2 9q-4 2-9 0z" fill="#fcc83c" />
        </svg>
      </button>
      <div className="flex shrink-0 gap-1">
        {TASKS.map((t) => (
          <button
            key={t.name}
            aria-label={t.name}
            className={clsx(
              "flex items-start justify-center rounded-t-[3px] border border-b-0 border-[#6c7478] bg-linear-to-br from-[#5c6266] to-[#20262a]",
              t.width,
              t.stacked && "mr-1 shadow-[3px_0_0_#30363a,4px_0_0_#6c7478]",
            )}
          >
            <svg viewBox="0 0 36 36" className="size-9 shrink-0">{t.icon}</svg>
          </button>
        ))}
      </div>
      <div className="ml-auto flex h-8 shrink-0 items-center gap-2 pr-0.5">
        <TrayIcon label="搜狗输入法" box="0 0 16 16" className="size-4">
          <rect x="1" y="1" width="14" height="14" rx="2" fill="#f0481c" transform="rotate(-6 8 8)" />
          <path d="M12.500 4.500C9 3 4.500 3.500 4.500 6c0 2.500 7 1.500 7 4 0 2-4.500 2.500-8 1" fill="none" stroke="#fff" strokeWidth="2.500" />
        </TrayIcon>
        <button className="text-xs leading-4">中</button>
        <TrayIcon label="半角" box="0 0 12 12" className="size-3"><path d="M6.500.5a6 6 0 1 1-6 8.500C5 9.500 8 6 6.500.5z" fill="#fff" /></TrayIcon>
        <TrayIcon label="标点" box="0 0 12 12" className="size-3"><circle cx="2.500" cy="2.500" r="1.700" fill="none" stroke="#fff" /><path d="M9 7.500h2.500v2L10 12" fill="none" stroke="#fff" strokeWidth="1.500" /></TrayIcon>
        <TrayIcon label="键盘" box="0 0 14 11" className="h-[11px] w-3.5"><path d="M.5.5h13v10H.5zM.5 3.500h13M.5 7h13M3.500 0v7M6.500 0v7M9.500 0v7M3.500 7v4M10.500 7v4" fill="none" stroke="#fff" /></TrayIcon>
        <TrayIcon label="用户" box="0 0 11 13" className="h-[13px] w-[11px]"><circle cx="5.500" cy="3.500" r="3.500" fill="#888" /><path d="M0 13V9l3-2h5l3 2v4z" fill="#888" /></TrayIcon>
        <TrayIcon label="设置" box="0 0 13 13" className="size-[13px]"><path d="M0 11l6-5.500C5 2.500 7.500 0 10.500.500L8.500 3l1.500 2L12.500 3.500c.500 3-2 5-4.500 4.500L2 13z" fill="#fff" /></TrayIcon>
        <TrayIcon label="弹出" box="0 0 13 13" className="size-[13px]"><path d="M6 1H1v11h11V7M5 8l6-6" fill="none" stroke="#fff" strokeWidth="1.500" /><path d="M7.500.5H13V6z" fill="#fff" /></TrayIcon>
        <button aria-label="帮助" className="flex size-[15px] items-center justify-center rounded-full border border-[#b8c4ec] bg-[#1530b8] text-[11px] font-bold">?</button>
        <div className="flex w-5 flex-col items-center gap-1.5 self-start pt-2">
          <svg viewBox="0 0 9 6" className="h-1.5 w-[9px]"><path d="M3 2V.5h5.500V4H6M.5 2.500H6v3H.5z" fill="none" stroke="#fff" /></svg>
          <Caret className="h-[3px] w-[5px]" />
        </div>
        <div className="-ml-1.5 flex h-8 w-[100px] items-center gap-2.5 rounded-tl-[14px] border-t border-l border-[#50585e] bg-linear-to-r from-[#34393e] to-[#0a0f14] to-30% pt-1 pl-3">
          <div className="flex items-center">
            <div className="flex h-[19px] w-[46px] items-center justify-center border border-white bg-[linear-gradient(90deg,#12963a_0,#12963a_57%,#050505_57%)] text-xs shadow-[inset_0_0_0_1px_#000]">57%</div>
            <div className="h-3 w-[3px] border border-l-0 border-white" />
          </div>
          <svg viewBox="0 0 17 13" className="h-[13px] w-[17px]"><path d="M9 1H4L1 4v5l3 3h5M9 3H6L4 5v3l2 2h3zM9 1v11" fill="none" stroke="#8c9094" strokeWidth="1.300" /><path d="M10 1.500h6M10 6.500h6M10 11.500h6" stroke="#8c9094" strokeWidth="2" /></svg>
        </div>
        <div className="flex h-8 items-center gap-2.5 pt-1">
          <Caret dir="up" className="mr-1 w-[7px]" />
          <TrayIcon label="操作中心" box="0 0 15 14" className="h-3.5 w-[15px]"><path d="M1 0v13" stroke="#fff" strokeWidth="1.500" /><path d="M2 1h4l1 1h5v6H7L6 7H2z" fill="#fff" /><circle cx="10" cy="9.500" r="4.500" fill="#d82020" /><path d="M8 7.500l4 4m0-4l-4 4" stroke="#fff" strokeWidth="1.400" /></TrayIcon>
          <TrayIcon label="电源" box="0 0 14 14" className="size-3.5"><path d="M7 2H1.500v11.500H9M3 2V.5h3" fill="none" stroke="#fff" strokeWidth="1.500" /><path d="M6 4.500h7V9l-2.500 2v3h-2v-3L6 9zM7 1h1.500v3H7zM10.500 1H12v3h-1.500z" fill="#fff" /></TrayIcon>
          <TrayIcon label="网络" box="0 0 14 12" className="h-3 w-3.5"><path d="M1 12v-2M4 12V8M7 12V6M10 12V3M13 12V0" stroke="#fff" strokeWidth="2" /></TrayIcon>
          <TrayIcon label="音量" box="0 0 14 13" className="h-[13px] w-3.5"><path d="M0 4.500h3L6 1v11L3 9H0z" fill="#fff" /><path d="M8 4.500q1.500 2 0 4M10 2.500q3 4 0 8" fill="none" stroke="#fff" /></TrayIcon>
        </div>
        <time className="h-8 w-[72px] pt-px text-center text-xs leading-[17px] whitespace-nowrap">
          22:54
          <br />
          2019/12/22
        </time>
      </div>
    </div>
  );
}

export default function App() {
  return (
    <div className={clsx(FONT, "flex h-screen flex-col overflow-hidden bg-[#eef0fc] text-black [&_button]:shrink-0")}>
      <TitleStrip />
      <MenuBar />
      <Ribbon />
      <div className="flex min-h-0 flex-1">
        <TreePanel />
        <Editor />
        <PicturePanel />
      </div>
      <StatusBar />
      <Taskbar />
    </div>
  );
}
